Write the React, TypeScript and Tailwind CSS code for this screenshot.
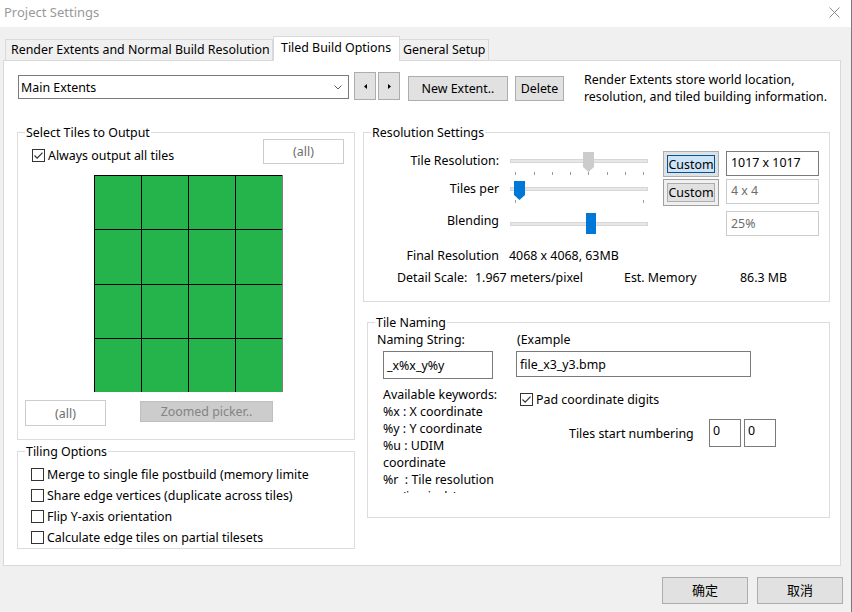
import React from "react";

function Check({ checked }: { checked?: boolean }) {
  return (
    <svg width="13" height="13" viewBox="0 0 13 13" className="shrink-0">
      <rect x="0.5" y="0.5" width="12" height="12" fill="white" stroke="#333333" />
      {checked && <path d="M2.5 6.5 L5.2 9.2 L10.5 3.6" fill="none" stroke="#333333" strokeWidth="1.2" />}
    </svg>
  );
}

function Group({ title, className, children }: { title: string; className: string; children?: React.ReactNode }) {
  return (
    <div className={className}>
      <div className="-mt-[9px] ml-[7px] w-fit bg-white px-px leading-[17px] whitespace-nowrap">{title}</div>
      {children}
    </div>
  );
}

function SliderA() {
  const ticks = [5, 24, 42, 60, 78, 97, 115, 133];
  return (
    <svg width="140" height="27" className="shrink-0">
      <rect x="0.5" y="8.5" width="137" height="3" fill="#e7e7e7" stroke="#d6d6d6" />
      {ticks.map((t) => (
        <line key={t} x1={t + 0.5} y1="21" x2={t + 0.5} y2="24" stroke="#9a9a9a" />
      ))}
      <polygon points="73,1 84,1 84,16 78.5,21 73,16" fill="#cccccc" />
    </svg>
  );
}

function SliderB() {
  return (
    <svg width="140" height="27" className="shrink-0">
      <rect x="0.5" y="8.5" width="137" height="3" fill="#e7e7e7" stroke="#d6d6d6" />
      <line x1="5.5" y1="21" x2="5.5" y2="24" stroke="#9a9a9a" />
      <line x1="133.5" y1="21" x2="133.5" y2="24" stroke="#9a9a9a" />
      <polygon points="4,2 15,2 15,16 9.5,21 4,16" fill="#0078d7" />
    </svg>
  );
}

function SliderC() {
  return (
    <svg width="140" height="25" className="shrink-0">
      <rect x="0.5" y="11.5" width="137" height="3" fill="#e7e7e7" stroke="#d6d6d6" />
      <rect x="76" y="2" width="10" height="21" fill="#0078d7" />
    </svg>
  );
}

export default function App() {
  return (
    <div className="w-[852px] h-[612px] bg-[#f0f0f0] font-['Noto_Sans','Noto_Sans_CJK_SC',sans-serif] text-[12.4px] text-black flex flex-col overflow-hidden border-r border-r-[#7a7a7a]">
      {/* title bar */}
      <div className="h-[27px] shrink-0 bg-white flex items-center justify-between pl-[4px] pr-[11px]">
        <span className="text-[13px] text-[#999999] leading-[17px] -mt-[3px]">Project Settings</span>
        <svg width="11" height="11" viewBox="0 0 11 11" className="-mt-[3px]">
          <path d="M0.5 0.5 L10.5 10.5 M10.5 0.5 L0.5 10.5" stroke="#8a8a8a" strokeWidth="1" />
        </svg>
      </div>

      {/* tabs */}
      <div className="h-[33px] shrink-0 flex items-end pl-[5px]">
        <div className="w-[268px] h-[21px] bg-[#f0f0f0] border border-b-0 border-[#d9d9d9] pl-[5px] leading-[19px] whitespace-nowrap">
          Render Extents and Normal Build Resolution
        </div>
        <div className="relative z-10 -mb-px w-[127px] h-[25px] bg-white border border-b-0 border-[#d9d9d9] pl-[7px] pt-[2px] leading-[17px] whitespace-nowrap">
          Tiled Build Options
        </div>
        <div className="w-[89px] h-[21px] bg-[#f0f0f0] border border-b-0 border-l-0 border-[#d9d9d9] pl-[3px] leading-[19px] whitespace-nowrap">
          General Setup
        </div>
      </div>

      {/* panel */}
      <div className="ml-[3px] w-[838px] h-[506px] shrink-0 bg-white border border-[#d9d9d9] flex flex-col">
        {/* top row */}
        <div className="h-[29px] mt-[11px] ml-[14px] flex items-start">
          <div className="mt-[3px] w-[331px] h-[24px] border border-[#7a7a7a] flex items-center justify-between pl-[2px] pr-[6px]">
            <span className="leading-[17px]">Main Extents</span>
            <svg width="8" height="5" viewBox="0 0 8 5">
              <path d="M0.5 0.5 L4 4 L7.5 0.5" fill="none" stroke="#606060" />
            </svg>
          </div>
          <div className="ml-[5px] w-[22px] h-[28px] bg-[#e1e1e1] border border-[#adadad] flex items-center justify-center">
            <svg width="3" height="5" viewBox="0 0 3 5"><polygon points="3,0 0,2.5 3,5" fill="#000" /></svg>
          </div>
          <div className="ml-[2px] w-[22px] h-[28px] bg-[#e1e1e1] border border-[#adadad] flex items-center justify-center">
            <svg width="3" height="5" viewBox="0 0 3 5"><polygon points="0,0 3,2.5 0,5" fill="#000" /></svg>
          </div>
          <div className="ml-[8px] mt-[4px] w-[100px] h-[25px] bg-[#e1e1e1] border border-[#adadad] flex items-center justify-center leading-[17px]">
            New Extent..
          </div>
          <div className="ml-[7px] mt-[4px] w-[49px] h-[25px] bg-[#e1e1e1] border border-[#adadad] flex items-center justify-center leading-[17px]">
            Delete
          </div>
          <div className="ml-[20px] -mt-[1px] leading-[17px] whitespace-nowrap">
            Render Extents store world location,
            <br />
            resolution, and tiled building information.
          </div>
        </div>

        {/* main area */}
        <div className="mt-[31px] ml-[13px] flex items-start">
          {/* left column */}
          <div className="flex flex-col">
            <Group title="Select Tiles to Output" className="w-[338px] h-[308px] border border-[#dcdcdc] flex flex-col">
              <div className="-mt-[2px] flex items-start justify-between pl-[14px] pr-[10px]">
                <div className="mt-[8px] flex items-center gap-[3px]">
                  <Check checked />
                  <span className="leading-[17px]">Always output all tiles</span>
                </div>
                <div className="w-[81px] h-[25px] border border-[#cccccc] flex items-center justify-center text-[#6d6d6d] leading-[17px]">
                  (all)
                </div>
              </div>
              <div className="ml-[76px] mt-[11px] w-[189px] h-[217px] bg-black border-r border-r-[#808080] pl-px pt-px grid grid-cols-4 grid-rows-4 gap-px">
                {Array.from({ length: 16 }).map((_, i) => (
                  <div key={i} className="bg-[#25b34c]" />
                ))}
              </div>
              <div className="mt-[8px] ml-[7px] flex items-start">
                <div className="w-[81px] h-[26px] border border-[#cccccc] flex items-center justify-center text-[#6d6d6d] leading-[17px]">
                  (all)
                </div>
                <div className="ml-[34px] mt-[1px] w-[133px] h-[21px] bg-[#cccccc] border border-[#bfbfbf] flex items-center justify-center text-[#838383] leading-[17px]">
                  Zoomed picker..
                </div>
              </div>
            </Group>

            <Group title="Tiling Options" className="mt-[11px] w-[338px] h-[98px] border border-[#dcdcdc] flex flex-col">
              <div className="mt-[4px] pl-[13px] flex flex-col">
                {[
                  "Merge to single file postbuild (memory limited)",
                  "Share edge vertices (duplicate across tiles)",
                  "Flip Y-axis orientation",
                  "Calculate edge tiles on partial tilesets",
                ].map((t) => (
                  <div key={t} className="h-[21px] flex items-center gap-[3px]">
                    <Check />
                    <span className="w-[262px] overflow-hidden whitespace-nowrap leading-[17px]">{t}</span>
                  </div>
                ))}
              </div>
            </Group>
          </div>

          {/* right column */}
          <div className="ml-[8px] flex flex-col">
            <Group title="Resolution Settings" className="w-[467px] h-[170px] border border-[#dcdcdc] flex flex-col">
              {/* row 1 */}
              <div className="mt-[10px] h-[27px] flex items-start">
                <div className="w-[135px] pt-px text-right leading-[17px] whitespace-nowrap">Tile Resolution:</div>
                <div className="ml-[11px]"><SliderA /></div>
                <div className="ml-[13px] w-[56px] h-[26px] bg-[#e1e1e1] border border-[#adadad] p-[3px]">
                  <div className="w-full h-full bg-[#cce4f7] border border-[#005499] flex items-center justify-center leading-[17px]">Custom</div>
                </div>
                <div className="ml-[7px] w-[93px] h-[25px] border border-[#7a7a7a] pl-[4px] leading-[21px] whitespace-nowrap">1017 x 1017</div>
              </div>
              {/* row 2 */}
              <div className="mt-px h-[27px] flex items-start">
                <div className="w-[135px] pt-px text-right leading-[17px] whitespace-nowrap">Tiles per</div>
                <div className="ml-[11px]"><SliderB /></div>
                <div className="ml-[13px] w-[56px] h-[27px] bg-[#f0f0f0] border border-[#a0a0a0] p-[3px]">
                  <div className="w-full h-full bg-[#e1e1e1] border border-[#adadad] flex items-center justify-center leading-[17px]">Custom</div>
                </div>
                <div className="ml-[7px] w-[93px] h-[25px] border border-[#cccccc] pl-[4px] leading-[21px] text-[#6d6d6d] whitespace-nowrap">4 x 4</div>
              </div>
              {/* row 3 */}
              <div className="mt-[5px] h-[25px] flex items-start">
                <div className="w-[135px] pt-px text-right leading-[17px] whitespace-nowrap">Blending</div>
                <div className="ml-[11px]"><SliderC /></div>
                <div className="ml-[13px] w-[56px]" />
                <div className="ml-[7px] w-[93px] h-[25px] border border-[#cccccc] pl-[4px] leading-[23px] text-[#6d6d6d]">25%</div>
              </div>
              <div className="mt-[11px] flex leading-[17px] whitespace-nowrap">
                <div className="w-[135px] text-right">Final Resolution</div>
                <div className="ml-[10px]">4068 x 4068, 63MB</div>
              </div>
              <div className="mt-[5px] ml-[33px] flex leading-[17px] whitespace-nowrap">
                <div className="w-[78px]">Detail Scale:</div>
                <div className="w-[149px]">1.967 meters/pixel</div>
                <div className="w-[116px]">Est. Memory</div>
                <div>86.3 MB</div>
              </div>
            </Group>

            <Group title="Tile Naming" className="mt-[20px] ml-[4px] w-[463px] h-[196px] border border-[#dcdcdc] flex flex-col">
              <div className="ml-[9px] flex leading-[17px] whitespace-nowrap">
                <div className="w-[140px]">Naming String:</div>
                <div>(Example</div>
              </div>
              <div className="mt-[3px] flex items-start">
                <div className="ml-[15px] w-[110px] h-[28px] border border-[#7a7a7a] pl-[3px] flex items-center leading-[17px]">_x%x_y%y</div>
                <div className="ml-[23px] w-[235px] h-[26px] border border-[#7a7a7a] pl-[3px] flex items-center leading-[17px]">file_x3_y3.bmp</div>
              </div>
              <div className="mt-[7px] flex items-start">
                <div className="ml-[15px] w-[137px] h-[107px] overflow-hidden leading-[17px] whitespace-pre">
                  {"Available keywords:\n%x : X coordinate\n%y : Y coordinate\n%u : UDIM\ncoordinate\n%r  : Tile resolution\n      (in pixels)"}
                </div>
                <div className="flex flex-col">
                  <div className="mt-[5px] h-[17px] flex items-center gap-[3px]">
                    <Check checked />
                    <span className="leading-[17px] whitespace-nowrap">Pad coordinate digits</span>
                  </div>
                  <div className="mt-[11px] h-[28px] flex items-center">
                    <div className="ml-[49px] w-[140px] leading-[17px] whitespace-nowrap">Tiles start numbering</div>
                    <div className="w-[32px] h-[28px] border border-[#7a7a7a] pl-[3px] pt-[2px] leading-[17px]">0</div>
                    <div className="ml-[3px] w-[32px] h-[28px] border border-[#7a7a7a] pl-[3px] pt-[2px] leading-[17px]">0</div>
                  </div>
                </div>
              </div>
            </Group>
          </div>
        </div>
      </div>

      {/* bottom buttons */}
      <div className="mt-[11px] flex justify-end gap-[9px] pr-[8px]">
        <div className="w-[86px] h-[27px] bg-[#e1e1e1] border border-[#adadad] flex items-center justify-center text-[13px] leading-[17px]">确定</div>
        <div className="w-[86px] h-[27px] bg-[#e1e1e1] border border-[#adadad] flex items-center justify-center text-[13px] leading-[17px]">取消</div>
      </div>
    </div>
  );
}
